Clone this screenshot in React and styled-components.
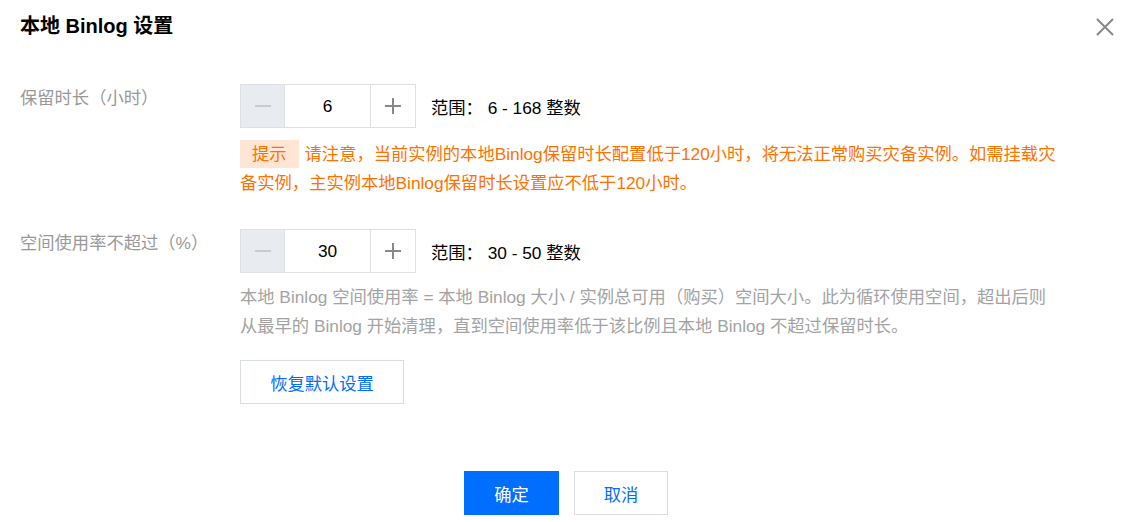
import React from 'react';
import styled, { createGlobalStyle } from 'styled-components';

const GlobalStyle = createGlobalStyle`
  html, body {
    margin: 0;
    padding: 0;
    background: #fff;
  }
  body {
    font-family: "Liberation Sans", "Noto Sans CJK SC", sans-serif;
    font-size: 17.3px;
    color: #000;
  }
`;

const Dialog = styled.div`
  width: 1132px;
  height: 522px;
  box-sizing: border-box;
  padding: 0 74px 0 20px;
  position: relative;
`;

const Header = styled.div`
  height: 52px;
  display: flex;
  align-items: center;
`;

const Title = styled.h2`
  margin: 0;
  font-size: 20px;
  font-weight: 700;
  line-height: 28px;
  color: #000;
`;

const CloseButton = styled.button`
  position: absolute;
  top: 16px;
  right: 16px;
  width: 22px;
  height: 22px;
  padding: 0;
  border: 0;
  background: none;
  display: flex;
  align-items: center;
  justify-content: center;
  cursor: pointer;
`;

const Body = styled.div`
  padding-top: 32px;
`;

const FormRow = styled.div`
  display: grid;
  grid-template-columns: 220px 1fr;
  margin-top: ${(p) => p.$top || 0}px;
`;

const Label = styled.div`
  line-height: 29px;
  color: #999;
`;

const Controls = styled.div`
  display: flex;
  align-items: center;
  gap: 15px;
`;

const Stepper = styled.div`
  display: flex;
  height: 44px;
  box-sizing: border-box;
  border: 1px solid #dcdfe6;
`;

const StepButton = styled.div`
  width: ${(p) => (p.$left ? 43 : 44)}px;
  display: flex;
  align-items: center;
  justify-content: center;
  background: ${(p) => (p.$disabled ? '#e8ebf0' : '#fff')};
  border-left: ${(p) => (p.$left ? 'none' : '1px solid #dcdfe6')};
`;

const StepInput = styled.div`
  width: 85px;
  display: flex;
  align-items: center;
  justify-content: center;
  border-left: 1px solid #dcdfe6;
  color: #000;
`;

const RangeText = styled.span`
  color: #000;
  white-space: pre;
`;

const Tip = styled.div`
  margin-top: 12px;
  line-height: 29px;
  color: #ff7200;
`;

const Tag = styled.span`
  display: inline-block;
  height: 28px;
  line-height: 28px;
  padding: 0 12px;
  margin-right: 6px;
  background: #ffe6d4;
  color: #ff7200;
  vertical-align: top;
`;

const Desc = styled.div`
  margin-top: 10px;
  line-height: 29px;
  color: #a3a3a3;
`;

const Button = styled.button`
  box-sizing: border-box;
  height: 44px;
  min-width: ${(p) => p.$width}px;
  padding: 0 20px;
  font-family: inherit;
  font-size: 17.3px;
  border: 1px solid ${(p) => (p.$primary ? '#006eff' : '#d9dee6')};
  background: ${(p) => (p.$primary ? '#006eff' : '#fff')};
  color: ${(p) => (p.$primary ? '#fff' : '#006eff')};
  cursor: pointer;
`;

const RestoreButton = styled(Button)`
  margin-top: 19px;
`;

const Footer = styled.div`
  position: absolute;
  left: 0;
  right: 0;
  top: 471px;
  display: flex;
  justify-content: center;
  gap: 15px;
`;

const Line = ({ color }) => (
  <svg width="16" height="16" viewBox="0 0 16 16">
    <rect x="0" y="7" width="16" height="2" fill={color} />
  </svg>
);

const Plus = ({ color }) => (
  <svg width="16" height="16" viewBox="0 0 16 16">
    <rect x="0" y="7" width="16" height="2" fill={color} />
    <rect x="7" y="0" width="2" height="16" fill={color} />
  </svg>
);

const NumberStepper = ({ value }) => (
  <Stepper>
    <StepButton $left $disabled>
      <Line color="#c5cad3" />
    </StepButton>
    <StepInput>{value}</StepInput>
    <StepButton>
      <Plus color="#888" />
    </StepButton>
  </Stepper>
);

const App = () => (
  <>
    <GlobalStyle />
    <Dialog>
      <Header>
        <Title>本地 Binlog 设置</Title>
      </Header>
      <CloseButton aria-label="关闭">
        <svg width="18" height="18" viewBox="0 0 18 18">
          <path d="M1 1 L17 17 M17 1 L1 17" stroke="#888" strokeWidth="2" fill="none" />
        </svg>
      </CloseButton>

      <Body>
        <FormRow>
          <Label>保留时长（小时）</Label>
          <div>
            <Controls>
              <NumberStepper value="6" />
              <RangeText>范围： 6 - 168 整数</RangeText>
            </Controls>
            <Tip>
              <Tag>提示</Tag>
              请注意，当前实例的本地Binlog保留时长配置低于120小时，将无法正常购买灾备实例。如需挂载灾备实例，主实例本地Binlog保留时长设置应不低于120小时。
            </Tip>
          </div>
        </FormRow>

        <FormRow $top={31}>
          <Label>空间使用率不超过（%）</Label>
          <div>
            <Controls>
              <NumberStepper value="30" />
              <RangeText>范围： 30 - 50 整数</RangeText>
            </Controls>
            <Desc>
              本地 Binlog 空间使用率 = 本地 Binlog 大小 / 实例总可用（购买）空间大小。此为循环使用空间，超出后则从最早的 Binlog 开始清理，直到空间使用率低于该比例且本地 Binlog 不超过保留时长。
            </Desc>
            <RestoreButton $width={164}>恢复默认设置</RestoreButton>
          </div>
        </FormRow>
      </Body>

      <Footer>
        <Button $primary $width={95}>确定</Button>
        <Button $width={94}>取消</Button>
      </Footer>
    </Dialog>
  </>
);

export default App;
